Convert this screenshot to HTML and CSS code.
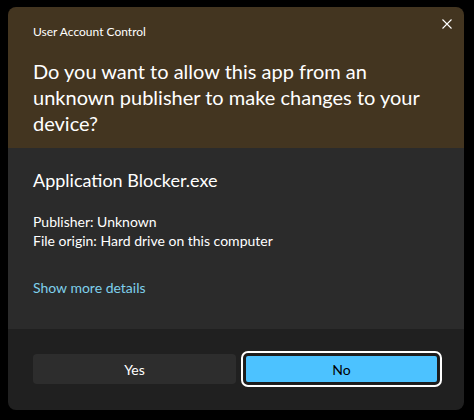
FILE: index.html
```html
<!DOCTYPE html>
<html>
<head>
<meta charset="utf-8">
<link rel="stylesheet" href="styles.css">
</head>
<body>
<div class="window">
  <div class="header">
    <div class="caption">User Account Control</div>
    <button class="close" aria-label="Close">
      <svg width="10" height="10" viewBox="0 0 10 10"><path d="M0.5 0.5 L9.5 9.5 M9.5 0.5 L0.5 9.5" stroke="#fff" stroke-width="1.1" fill="none"/></svg>
    </button>
    <div class="question">Do you want to allow this app from an unknown publisher to make changes to your device?</div>
  </div>
  <div class="content">
    <div class="appname">Application Blocker.exe</div>
    <div class="details">
      <div>Publisher: Unknown</div>
      <div>File origin: Hard drive on this computer</div>
    </div>
    <a class="more" href="#">Show more details</a>
  </div>
  <div class="footer">
    <button class="btn yes">Yes</button>
    <button class="btn no">No</button>
  </div>
</div>
</body>
</html>
```
FILE: styles.css
```css
html, body { margin: 0; padding: 0; background: #000; }
body { font-family: Lato, "Open Sans", sans-serif; color: #fff; }
.window {
  position: relative;
  margin: 7px 0 0 8px;
  width: 456px;
  height: 403px;
  border-radius: 8px;
  overflow: hidden;
  display: flex;
  flex-direction: column;
}
.header {
  background: #433520;
  height: 141px;
  box-sizing: border-box;
  padding: 17px 25px 0 25px;
}
.caption { font-size: 12px; line-height: 16px; }
.close {
  position: absolute; top: 6px; right: 6px;
  width: 22px; height: 22px; padding: 0; border: 0; background: transparent;
  display: flex; align-items: center; justify-content: center;
}
.close svg { display: block; }
.question { margin-top: 18px; font-size: 20px; line-height: 26px; }
.content {
  background: #2b2b2b;
  height: 181px;
  box-sizing: border-box;
  padding: 20px 25px 0 25px;
}
.appname { font-size: 18px; line-height: 24px; }
.details { margin-top: 19.5px; font-size: 14px; line-height: 19.5px; }
.more { display: inline-block; margin-top: 27.5px; font-size: 14px; line-height: 20px; color: #7fd0ec; text-decoration: none; }
.footer {
  flex: 1;
  background: #202020;
  display: grid;
  grid-template-columns: 203px 195px;
  column-gap: 8px;
  padding: 25px 0 0 25px;
  align-items: start;
}
.btn {
  height: 30px; border-radius: 4px; font-family: inherit; font-size: 14px;
  border: 0; padding: 0;
}
.yes { background: #2d2d2d; color: #fff; }
.no {
  background: #4cc2ff; color: #000;
  border: 2px solid #1c1c1c;
  outline: 2px solid #fff; outline-offset: 1px;
  border-radius: 4px;
}
```
